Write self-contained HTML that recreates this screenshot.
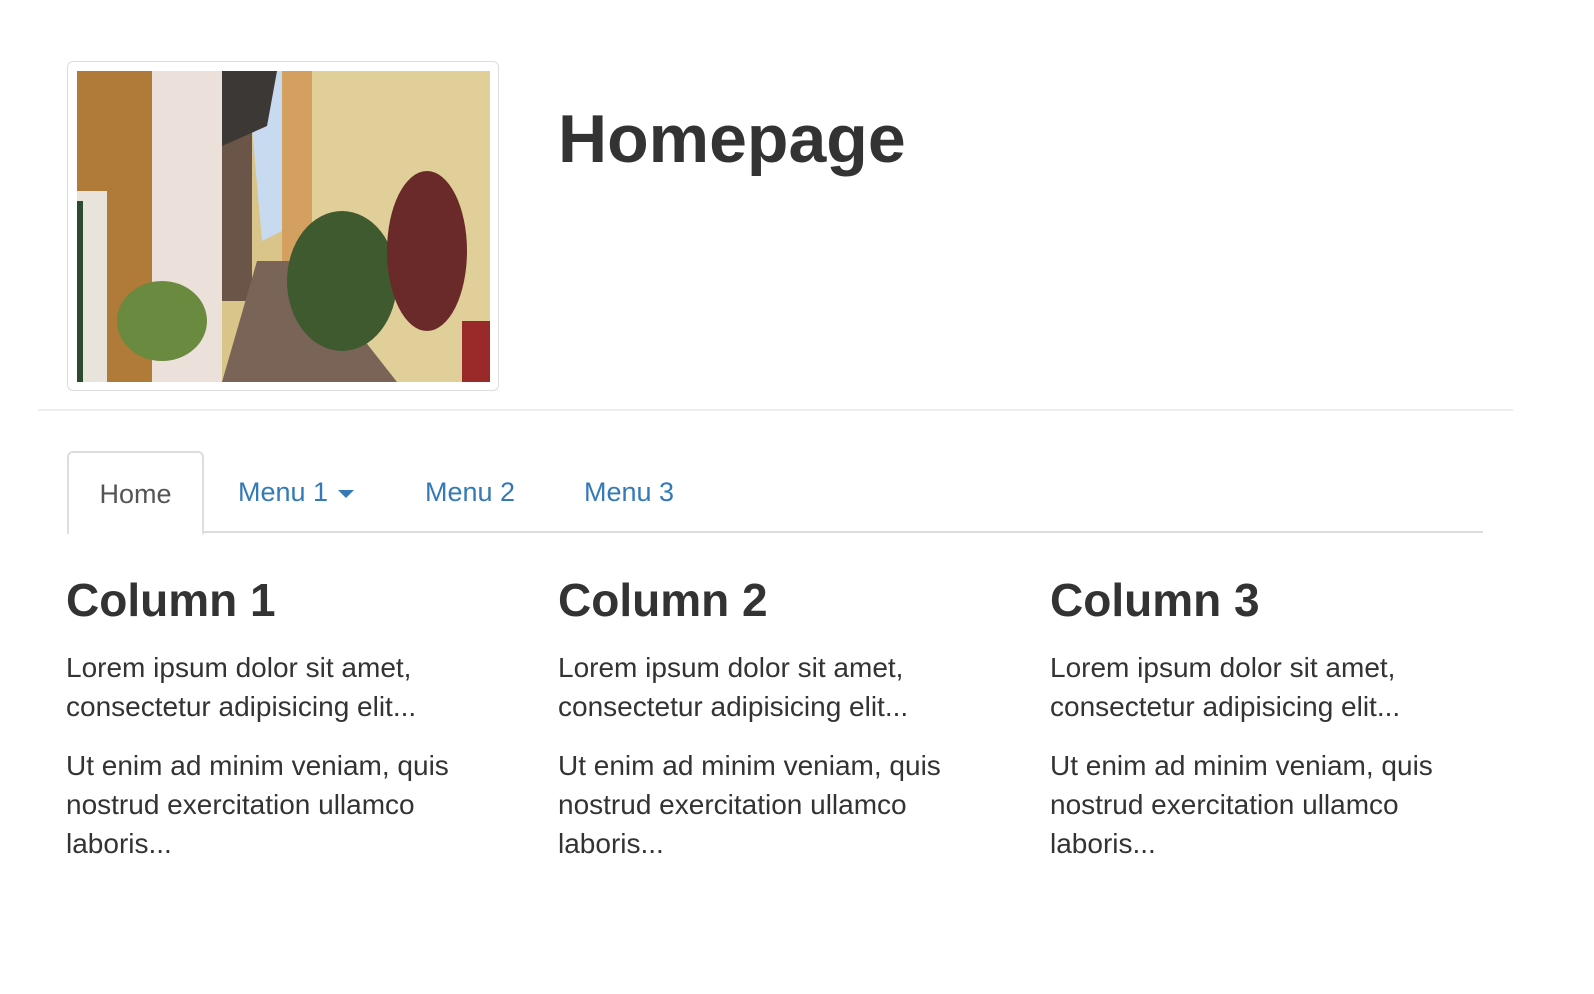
<!DOCTYPE html>
<html><head><style>
body{margin:0;background:#fff;font-family:"Liberation Sans",Arial,sans-serif;color:#333;}
.thumb{position:absolute;left:67px;top:61px;width:430px;height:328px;border:1px solid #ddd;border-radius:6px;background:#fff;}
.thumb svg{position:absolute;left:9px;top:9px;}
h1{position:absolute;left:558px;top:102px;margin:0;font-size:68px;font-weight:bold;line-height:1.1;color:#333;}
.hr{position:absolute;left:38px;top:409px;width:1475px;height:2px;background:#eee;}
.tabs{position:absolute;left:67px;top:451px;width:1416px;height:80px;border-bottom:2px solid #ddd;}
.tab{position:absolute;top:0;height:80px;line-height:82px;font-size:27px;color:#337ab7;}
.tab.active{left:0;width:133px;border:2px solid #ddd;border-bottom:2px solid #fff;border-radius:6px 6px 0 0;color:#555;text-align:center;background:#fff;height:80px;}
.caret{display:inline-block;width:0;height:0;border-left:8px solid transparent;border-right:8px solid transparent;border-top:8px solid #337ab7;vertical-align:middle;margin-left:10px;}
.col{position:absolute;top:570px;width:460px;}
.col h2{margin:0 0 18px;font-size:46px;font-weight:bold;line-height:60px;}
.col p{margin:0 0 20px;font-size:28px;line-height:39px;}
</style></head><body>
<div class="thumb"><svg width="413" height="311" viewBox="0 0 413 311">
<rect width="413" height="311" fill="#d9c48a"/>
<polygon points="170,0 215,0 205,160 185,170" fill="#c8daf0"/>
<rect x="0" y="0" width="75" height="311" fill="#b07a38"/>
<rect x="0" y="120" width="30" height="191" fill="#e8e4dc"/>
<rect x="0" y="130" width="6" height="181" fill="#2d4a30"/>
<rect x="75" y="0" width="70" height="311" fill="#ece0da"/>
<rect x="145" y="0" width="30" height="230" fill="#6a5548"/>
<polygon points="145,0 200,0 190,55 145,75" fill="#3c3836"/>
<rect x="205" y="0" width="30" height="220" fill="#d4a060"/>
<rect x="235" y="0" width="178" height="311" fill="#e0cf98"/>
<polygon points="145,311 180,190 225,190 320,311" fill="#7a6458"/>
<ellipse cx="265" cy="210" rx="55" ry="70" fill="#3e5a2e"/>
<ellipse cx="350" cy="180" rx="40" ry="80" fill="#6a2a2a"/>
<ellipse cx="85" cy="250" rx="45" ry="40" fill="#6a8a40"/>
<rect x="385" y="250" width="28" height="61" fill="#9a2a2a"/>
</svg></div>
<h1>Homepage</h1>
<div class="hr"></div>
<div class="tabs">
<div class="tab active">Home</div>
<div class="tab" style="left:171px">Menu 1<span class="caret"></span></div>
<div class="tab" style="left:358px">Menu 2</div>
<div class="tab" style="left:517px">Menu 3</div>
</div>
<div class="col" style="left:66px"><h2>Column 1</h2><p>Lorem ipsum dolor sit amet, consectetur adipisicing elit...</p><p>Ut enim ad minim veniam, quis nostrud exercitation ullamco laboris...</p></div>
<div class="col" style="left:558px"><h2>Column 2</h2><p>Lorem ipsum dolor sit amet, consectetur adipisicing elit...</p><p>Ut enim ad minim veniam, quis nostrud exercitation ullamco laboris...</p></div>
<div class="col" style="left:1050px"><h2>Column 3</h2><p>Lorem ipsum dolor sit amet, consectetur adipisicing elit...</p><p>Ut enim ad minim veniam, quis nostrud exercitation ullamco laboris...</p></div>
</body></html>
